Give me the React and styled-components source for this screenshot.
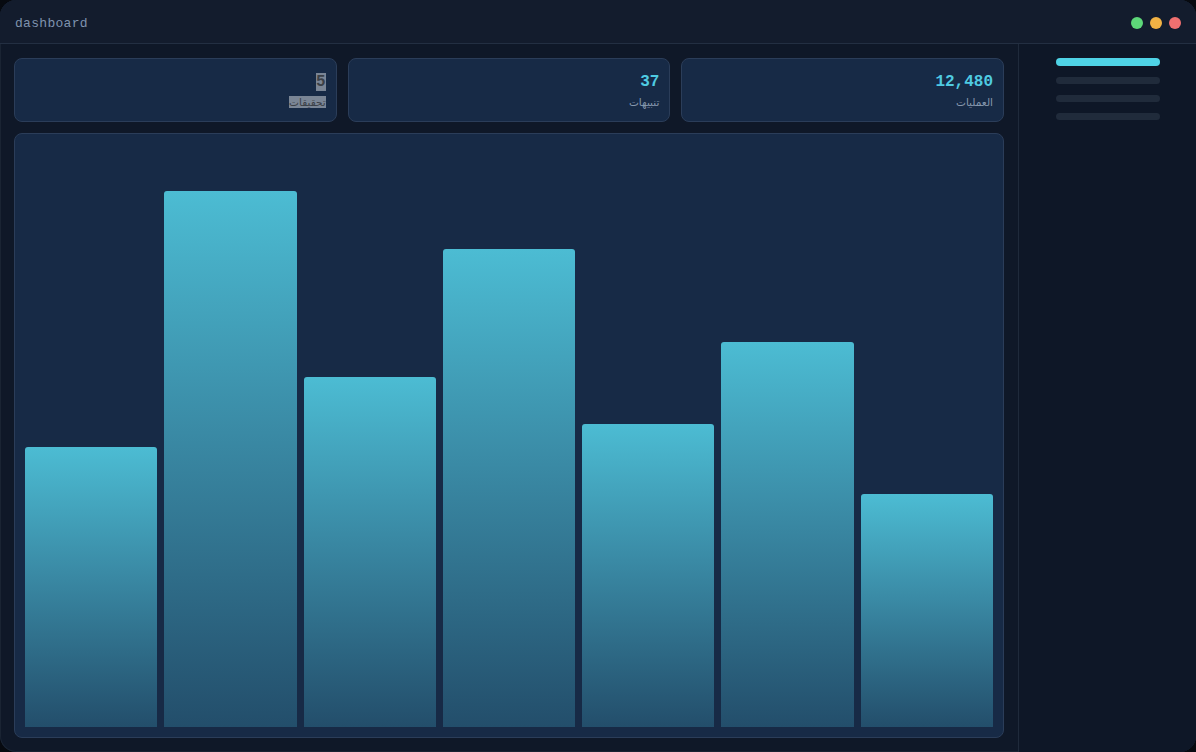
import React from "react"
import styled, { createGlobalStyle } from "styled-components"

const GlobalStyle = createGlobalStyle`
  html, body {
    margin: 0;
    padding: 0;
    background: #070a10;
  }
  body {
    font-family: "DejaVu Sans", "Noto Sans", sans-serif;
  }
`

const Frame = styled.div`
  width: 1196px;
  height: 752px;
  box-sizing: border-box;
  border-radius: 16px;
  overflow: hidden;
  background: #0f1828;
  box-shadow: inset 0 0 0 1px #1a2433;
  display: flex;
  flex-direction: column;
`

const TitleBar = styled.div`
  height: 44px;
  box-sizing: border-box;
  flex: none;
  display: flex;
  align-items: center;
  justify-content: space-between;
  padding: 3px 15px 0 15px;
  background: #131c2d;
  border-bottom: 1px solid #232f42;
`

const Title = styled.span`
  font-family: "Liberation Mono", "DejaVu Sans Mono", monospace;
  font-size: 13px;
  letter-spacing: 0.3px;
  color: #7f93ad;
`

const Dots = styled.div`
  display: flex;
  gap: 7px;
`

const Dot = styled.span`
  width: 12px;
  height: 12px;
  border-radius: 50%;
  background: ${(p) => p.color};
`

const Body = styled.div`
  flex: 1;
  display: flex;
  direction: rtl;
  min-height: 0;
`

const Sidebar = styled.aside`
  width: 178px;
  flex: none;
  box-sizing: border-box;
  padding: 14px 36px 0 37px;
  border-left: 1px solid #1f2a3b;
  background: #0e1727;
  display: flex;
  flex-direction: column;
  gap: 11px;
`

const NavLine = styled.div`
  height: ${(p) => (p.active ? "8px" : "7px")};
  border-radius: 4px;
  background: ${(p) => (p.active ? "#4fd3e6" : "#202b3b")};
`

const Main = styled.main`
  flex: 1;
  padding: 14px;
  display: flex;
  flex-direction: column;
  gap: 11px;
  min-width: 0;
`

const Cards = styled.div`
  display: grid;
  grid-template-columns: repeat(3, 1fr);
  gap: 11px;
`

const Card = styled.div`
  height: 64px;
  box-sizing: border-box;
  background: #172a46;
  border: 1px solid #2b3d59;
  border-radius: 8px;
  padding: 12px 10px 0 10px;
  display: flex;
  flex-direction: column;
  align-items: flex-start;
`

const Value = styled.div`
  font-family: "Liberation Mono", "DejaVu Sans Mono", monospace;
  font-size: 16px;
  font-weight: bold;
  line-height: 22px;
  color: #4fcbe2;
  direction: ltr;
`

const Label = styled.div`
  margin-top: 2px;
  font-family: "DejaVu Sans", "Noto Sans", sans-serif;
  font-size: 10.5px;
  line-height: 15px;
  color: #8697ad;
`

const Selected = styled.span`
  background: #7a8595;
  color: #3b4047;
`

const Chart = styled.section`
  flex: 1;
  box-sizing: border-box;
  background: #172a46;
  border: 1px solid #2b3d59;
  border-radius: 8px;
  padding: 10px;
  display: flex;
  direction: ltr;
  align-items: flex-end;
  gap: 7px;
`

const Bar = styled.div`
  flex: 1;
  border-radius: 3px 3px 0 0;
  background: linear-gradient(180deg, #4cbcd3 0%, #3a8aa5 45%, #234e6b 100%);
`

const stats = [
  { value: "12,480", label: "العمليات" },
  { value: "37", label: "تنبيهات" },
  { value: "5", label: "تحقيقات", selected: true },
]

const bars = [48, 92, 60, 82, 52, 66, 40]

const App = () => {
  return (
    <>
      <GlobalStyle />
      <Frame>
        <TitleBar>
          <Title>dashboard</Title>
          <Dots>
            <Dot color="#5dd879" />
            <Dot color="#f1b244" />
            <Dot color="#f07070" />
          </Dots>
        </TitleBar>
        <Body>
          <Sidebar>
            <NavLine active />
            <NavLine />
            <NavLine />
            <NavLine />
          </Sidebar>
          <Main>
            <Cards>
              {stats.map((s) => (
                <Card key={s.label}>
                  <Value>{s.selected ? <Selected>{s.value}</Selected> : s.value}</Value>
                  <Label>{s.selected ? <Selected>{s.label}</Selected> : s.label}</Label>
                </Card>
              ))}
            </Cards>
            <Chart>
              {bars.map((h, i) => (
                <Bar key={i} style={{ height: `${h}%` }} />
              ))}
            </Chart>
          </Main>
        </Body>
      </Frame>
    </>
  )
}

export default App
